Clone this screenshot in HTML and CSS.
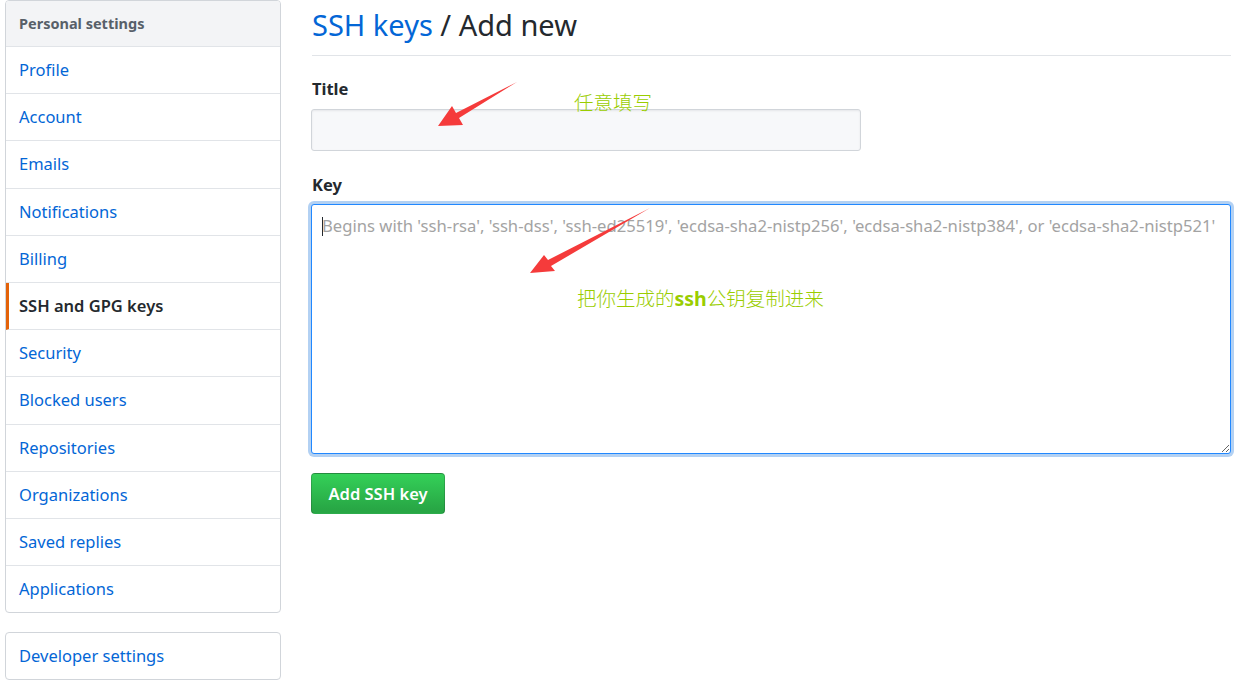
FILE: index.html
```html
<!DOCTYPE html>
<html lang="en">
<head>
<meta charset="utf-8">
<title>SSH keys / Add new</title>
<link rel="stylesheet" href="styles.css">
</head>
<body>
<div class="page">
  <nav class="sidebar">
    <div class="menu">
      <div class="menu-heading">Personal settings</div>
      <a class="menu-item" href="#">Profile</a>
      <a class="menu-item" href="#">Account</a>
      <a class="menu-item" href="#">Emails</a>
      <a class="menu-item" href="#">Notifications</a>
      <a class="menu-item" href="#">Billing</a>
      <a class="menu-item selected" href="#">SSH and GPG keys</a>
      <a class="menu-item" href="#">Security</a>
      <a class="menu-item" href="#">Blocked users</a>
      <a class="menu-item" href="#">Repositories</a>
      <a class="menu-item" href="#">Organizations</a>
      <a class="menu-item" href="#">Saved replies</a>
      <a class="menu-item last" href="#">Applications</a>
    </div>
    <div class="menu dev">
      <a class="menu-item last" href="#">Developer settings</a>
    </div>
  </nav>
  <main class="content">
    <h2 class="subhead"><a class="crumb" href="#">SSH keys</a> / Add new</h2>
    <form class="key-form">
      <label class="field-label" for="title">Title</label>
      <input class="text-input" id="title" type="text">
      <label class="field-label" for="key">Key</label>
      <div class="key-wrap">
        <textarea class="key-input" id="key" placeholder="Begins with 'ssh-rsa', 'ssh-dss', 'ssh-ed25519', 'ecdsa-sha2-nistp256', 'ecdsa-sha2-nistp384', or 'ecdsa-sha2-nistp521'"></textarea>
        <span class="caret"></span>
      </div>
      <button class="btn-primary" type="button">Add SSH key</button>
    </form>
  </main>
  <svg class="arrows" width="1249" height="693" viewBox="0 0 1249 693" aria-hidden="true">
    <polygon fill="#f53b3b" points="517,82 456,113 452,106 438,126 463,125 459,118"/>
    <polygon fill="#f53b3b" points="650,208 548,260 544,255 530,273 555,271 551,266"/>
  </svg>
  <span class="note note-title">任意填写</span>
  <span class="note note-key">把你生成的<b>ssh</b>公钥复制进来</span>
</div>
</body>
</html>
```

FILE: styles.css
```css
* { box-sizing: border-box; }
html, body { margin: 0; padding: 0; background: #fff; }
body {
  font-family: "Noto Sans", "Open Sans", "Noto Sans CJK SC", sans-serif;
  color: #24292e;
  font-size: 16.5px;
}
.page {
  position: relative;
  display: flex;
  gap: 30px;
  padding: 0 18px 0 5px;
  height: 693px;
  overflow: hidden;
}
.sidebar { width: 276px; flex: none; }
.menu {
  border: 1px solid #d1d5da;
  border-radius: 4px;
  background: #fff;
  overflow: hidden;
}
.menu-heading {
  background: #f3f4f6;
  color: #586069;
  font-weight: 700;
  font-size: 14.5px;
  line-height: 26px;
  padding: 9px 13px 10px;
  border-bottom: 1px solid #e1e4e8;
}
.menu-item {
  display: block;
  color: #0366d6;
  text-decoration: none;
  line-height: 26.2px;
  padding: 10px 13px;
  border-bottom: 1px solid #e1e4e8;
}
.menu-item.last { border-bottom: none; }
.menu-item.selected {
  color: #24292e;
  font-weight: 600;
  border-left: 3px solid #e36209;
  padding-left: 10px;
}
.dev { margin-top: 19px; }
.dev .menu-item { padding: 10px 13px; line-height: 26px; }

.content { flex: 1; min-width: 0; padding-left: 1px; }
.subhead {
  margin: 0;
  font-size: 29px;
  font-weight: 400;
  line-height: 44px;
  padding: 3px 0 8px;
  border-bottom: 1px solid #e1e4e8;
}
.crumb { color: #0366d6; text-decoration: none; }
.key-form { display: flex; flex-direction: column; align-items: flex-start; }
.field-label {
  font-weight: 700;
  line-height: 22px;
  margin-top: 22px;
  margin-bottom: 9px;
}
.field-label + .text-input { margin-bottom: 1px; }
.text-input {
  width: 550px;
  height: 42px;
  margin-left: -1px;
  background: #f7f8fa;
  border: 1px solid #d1d5da;
  border-radius: 3px;
  box-shadow: inset 0 1px 2px rgba(27,31,35,0.075);
}
.key-wrap {
  position: relative;
  align-self: stretch;
  margin-top: -1px;
  margin-left: -1px;
  display: flex;
}
.key-input {
  flex: 1;
  height: 250px;
  resize: vertical;
  border: 1px solid #2188ff;
  border-radius: 3px;
  box-shadow: 0 0 0 3px rgba(3,102,214,0.3);
  outline: none;
  padding: 9px 10px;
  font-family: inherit;
  font-size: 16.65px;
  line-height: 24px;
  color: #24292e;
}
.key-input::placeholder { color: #a3a3a3; }
.caret {
  position: absolute;
  left: 11px;
  top: 13px;
  width: 1px;
  height: 19px;
  background: #24292e;
}
.btn-primary {
  margin-top: 19px;
  margin-left: -1px;
  height: 41px;
  width: 134px;
  padding: 0;
  border: 1px solid rgba(27,31,35,0.2);
  border-radius: 4px;
  color: #fff;
  font-family: inherit;
  font-weight: 600;
  font-size: 16.5px;
  background: linear-gradient(#34d058, #28a745 90%);
}

.arrows { position: absolute; left: 0; top: 0; pointer-events: none; }
.note {
  position: absolute;
  color: #9acd00;
  font-family: "Noto Sans CJK SC", sans-serif;
  font-weight: 300;
  font-size: 19.5px;
  line-height: 26px;
  white-space: nowrap;
}
.note b { font-family: "Noto Sans", sans-serif; font-weight: 700; }
.note-title { left: 574px; top: 89px; }
.note-key { left: 577px; top: 285px; }
```
